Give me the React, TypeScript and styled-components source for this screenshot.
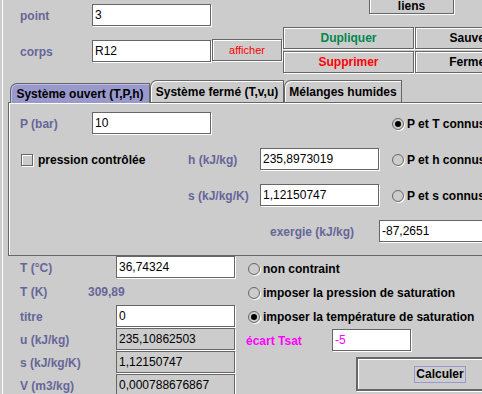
import React from 'react';
import styled, { createGlobalStyle } from 'styled-components';

const GlobalStyle = createGlobalStyle`
  html, body {
    margin: 0;
    padding: 0;
    background: #cccccc;
  }
  body {
    font-family: "Liberation Sans", Arial, sans-serif;
    font-size: 12px;
    overflow: hidden;
  }
`;

const LABEL = '#666699';
const DARK = '#666666';

const Frame = styled.div`
  box-sizing: border-box;
  width: 480px;
  height: 394px;
  margin-left: 2px;
  border-left: 1px solid #fff;
  background: #cccccc;
  overflow: hidden;
`;

const TopArea = styled.div`
  display: flex;
  align-items: flex-start;
  height: 75px;
`;

const LeftForm = styled.div`
  width: 209px;
  box-sizing: border-box;
  padding: 4px 0 0 17px;
  display: flex;
  flex-direction: column;
  gap: 13px;
  flex-shrink: 0;
`;

const Row = styled.div<{ $h?: number }>`
  display: flex;
  align-items: center;
  height: ${p => p.$h ?? 23}px;
  flex-shrink: 0;
`;

const Label = styled.span<{ $w?: number; $color?: string }>`
  width: ${p => p.$w ?? 72}px;
  flex-shrink: 0;
  color: ${p => p.$color ?? LABEL};
  font-weight: bold;
  white-space: nowrap;
`;

const Field = styled.div<{ $w?: number; $readOnly?: boolean; $color?: string }>`
  box-sizing: border-box;
  width: ${p => (p.$w ?? 120) - 1}px;
  height: 22px;
  margin: 0 1px 1px 0;
  border: 1px solid ${DARK};
  box-shadow: 1px 1px 0 #fff;
  background: ${p => (p.$readOnly ? '#cccccc' : '#ffffff')};
  color: ${p => p.$color ?? '#000'};
  padding-left: 2px;
  line-height: 20px;
  white-space: nowrap;
  overflow: hidden;
  flex-shrink: 0;
`;

const RightBlock = styled.div`
  display: flex;
  flex-direction: column;
  margin-top: -8px;
  gap: 13px;
`;

const Button = styled.div<{ $w?: number; $color?: string; $plain?: boolean }>`
  box-sizing: border-box;
  width: ${p => (p.$w ? `${p.$w - 1}px` : 'auto')};
  height: 22px;
  border: 1px solid ${DARK};
  box-shadow: inset 1px 1px 0 #fff, 1px 1px 0 #fff;
  background: #cccccc;
  display: flex;
  align-items: center;
  justify-content: center;
  color: ${p => p.$color ?? '#000'};
  font-weight: ${p => (p.$plain ? 'normal' : 'bold')};
  font-size: ${p => (p.$plain ? 11 : 12)}px;
  white-space: nowrap;
  flex-shrink: 0;
`;

const LiensButton = styled(Button)`
  margin-left: 157px;
  padding-top: 5px;
`;

const ActionRow = styled.div`
  display: flex;
  align-items: flex-start;
  gap: 1px;
`;

const AfficherButton = styled(Button)`
  margin-top: 12px;
`;

const ButtonGrid = styled.div`
  display: grid;
  grid-template-columns: 131px 109px;
  grid-auto-rows: 23px;
  gap: 1px;
`;

const TabStrip = styled.div`
  display: flex;
  align-items: flex-end;
  height: 22px;
  margin: 5px 0 0 7px;
`;

const Tab = styled.div<{ $active?: boolean; $w: number }>`
  box-sizing: border-box;
  width: ${p => p.$w}px;
  height: ${p => (p.$active ? 20 : 22)}px;
  margin-bottom: ${p => (p.$active ? -1 : 0)}px;
  position: relative;
  z-index: ${p => (p.$active ? 2 : 0)};
  border: 1px solid ${DARK};
  border-bottom: none;
  border-top-left-radius: 7px;
  background: ${p => (p.$active ? '#9999cc' : '#cccccc')};
  box-shadow: inset 1px 1px 0 ${p => (p.$active ? '#bbbbee' : '#ffffff')};
  display: flex;
  align-items: center;
  justify-content: center;
  font-weight: bold;
  color: #000;
  white-space: nowrap;
`;

const Panel = styled.div`
  box-sizing: border-box;
  width: 600px;
  margin-left: 5px;
  border: 1px solid ${DARK};
  border-right: none;
  box-shadow: inset 1px 1px 0 #fff;
  padding: 9px 0 12px 11px;
  display: grid;
  grid-template-columns: 168px 72px 120px auto;
  grid-auto-rows: 23px;
  row-gap: 13px;
  align-items: center;
`;

const Cell = styled.div<{ $col?: string }>`
  grid-column: ${p => p.$col ?? 'auto'};
  display: flex;
  align-items: center;
  height: 23px;
`;

const RadioCell = styled(Cell)`
  padding-left: 12px;
`;

const ExergieCell = styled(Cell)`
  padding-left: 82px;
`;

const Option = styled.label`
  display: flex;
  align-items: center;
  gap: 3px;
  font-weight: bold;
  color: #000;
  white-space: nowrap;
`;

const RadioDot = styled.span<{ $on?: boolean }>`
  box-sizing: border-box;
  width: 12px;
  height: 12px;
  border-radius: 50%;
  border: 1px solid ${DARK};
  box-shadow: 1px 1px 0 #fff;
  display: flex;
  align-items: center;
  justify-content: center;
  flex-shrink: 0;

  &::after {
    content: '';
    display: ${p => (p.$on ? 'block' : 'none')};
    width: 6px;
    height: 6px;
    border-radius: 50%;
    background: #000;
  }
`;

const CheckBox = styled.span`
  box-sizing: border-box;
  width: 12px;
  height: 12px;
  border: 1px solid ${DARK};
  box-shadow: 1px 1px 0 #fff, inset 1px 1px 0 #fff;
  flex-shrink: 0;
`;

const CheckOption = styled(Option)`
  gap: 5px;
  margin-left: 1px;
`;

const BottomArea = styled.div`
  display: flex;
  align-items: flex-start;
`;

const LeftCol = styled.div`
  box-sizing: border-box;
  width: 243px;
  padding-left: 17px;
  display: flex;
  flex-direction: column;
  flex-shrink: 0;
`;

const Value = styled.span`
  color: ${LABEL};
  font-weight: bold;
`;

const RightCol = styled.div`
  display: flex;
  flex-direction: column;
  padding-top: 1px;
`;

const RadioRow = styled(Row)`
  padding-left: 2px;
`;

const CalcButton = styled.div`
  box-sizing: border-box;
  width: 168px;
  height: 34px;
  margin: 5px 0 0 110px;
  border: 2px solid ${DARK};
  box-shadow: inset 1px 1px 0 #fff, 1px 1px 0 #fff;
  background: #cccccc;
  display: flex;
  align-items: center;
  justify-content: center;
`;

const FocusText = styled.span`
  border: 1px solid #9999cc;
  padding: 0 1px;
  line-height: 15px;
  font-weight: bold;
  color: #000;
`;

const Radio = ({ on, children }: { on?: boolean; children: React.ReactNode }) => (
  <Option>
    <RadioDot $on={on} />
    {children}
  </Option>
);

const App = () => {
  return (
    <>
      <GlobalStyle />
      <Frame>
        <TopArea>
          <LeftForm>
            <Row>
              <Label>point</Label>
              <Field>3</Field>
            </Row>
            <Row>
              <Label>corps</Label>
              <Field>R12</Field>
            </Row>
          </LeftForm>
          <RightBlock>
            <LiensButton $w={86}>liens</LiensButton>
            <ActionRow>
              <AfficherButton $w={71} $color="#ff0000" $plain>afficher</AfficherButton>
              <ButtonGrid>
                <Button $color="#00884a">Dupliquer</Button>
                <Button>Sauver</Button>
                <Button $color="#ff0000">Supprimer</Button>
                <Button>Fermer</Button>
              </ButtonGrid>
            </ActionRow>
          </RightBlock>
        </TopArea>

        <TabStrip>
          <Tab $w={140} $active>Système ouvert (T,P,h)</Tab>
          <Tab $w={134}>Système fermé (T,v,u)</Tab>
          <Tab $w={118}>Mélanges humides</Tab>
        </TabStrip>
        <Panel>
          <Cell $col="1 / 4">
            <Label>P (bar)</Label>
            <Field>10</Field>
          </Cell>
          <RadioCell $col="4">
            <Radio on>P et T connus</Radio>
          </RadioCell>

          <Cell $col="1">
            <CheckOption>
              <CheckBox />
              pression contrôlée
            </CheckOption>
          </Cell>
          <Cell $col="2"><Label>h (kJ/kg)</Label></Cell>
          <Cell $col="3"><Field>235,8973019</Field></Cell>
          <RadioCell $col="4">
            <Radio>P et h connus</Radio>
          </RadioCell>

          <Cell $col="2"><Label>s (kJ/kg/K)</Label></Cell>
          <Cell $col="3"><Field>1,12150747</Field></Cell>
          <RadioCell $col="4">
            <Radio>P et s connus</Radio>
          </RadioCell>

          <ExergieCell $col="2 / 5">
            <Label $w={109}>exergie (kJ/kg)</Label>
            <Field>-87,2651</Field>
          </ExergieCell>
        </Panel>

        <BottomArea>
          <LeftCol>
            <Row>
              <Label $w={96}>T (°C)</Label>
              <Field>36,74324</Field>
            </Row>
            <Row $h={26}>
              <Label $w={68}>T (K)</Label>
              <Value>309,89</Value>
            </Row>
            <Row>
              <Label $w={96}>titre</Label>
              <Field>0</Field>
            </Row>
            <Row>
              <Label $w={96}>u (kJ/kg)</Label>
              <Field $readOnly>235,10862503</Field>
            </Row>
            <Row>
              <Label $w={96}>s (kJ/kg/K)</Label>
              <Field $readOnly>1,12150747</Field>
            </Row>
            <Row>
              <Label $w={96}>V (m3/kg)</Label>
              <Field $readOnly>0,000788676867</Field>
            </Row>
          </LeftCol>
          <RightCol>
            <RadioRow $h={24}>
              <Radio>non contraint</Radio>
            </RadioRow>
            <RadioRow $h={24}>
              <Radio>imposer la pression de saturation</Radio>
            </RadioRow>
            <RadioRow $h={24}>
              <Radio on>imposer la température de saturation</Radio>
            </RadioRow>
            <Row>
              <Label $w={86} $color="#ff00ff">écart Tsat</Label>
              <Field $w={80} $color="#ff00ff">-5</Field>
            </Row>
            <CalcButton>
              <FocusText>Calculer</FocusText>
            </CalcButton>
          </RightCol>
        </BottomArea>
      </Frame>
    </>
  );
};

export default App;
